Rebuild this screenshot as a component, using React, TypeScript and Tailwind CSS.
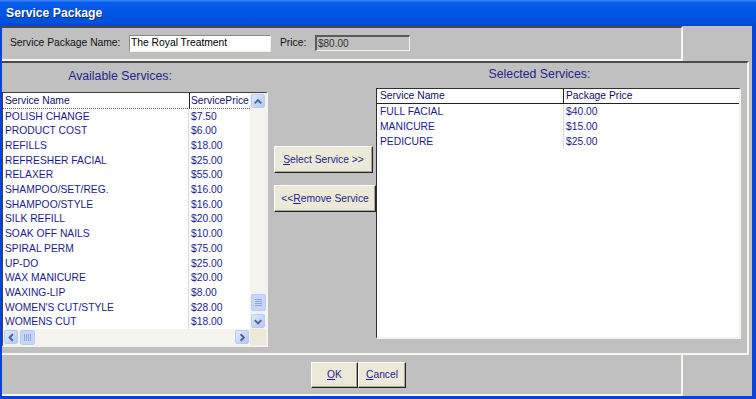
import React from 'react';

const available: [string, string][] = [
  ['POLISH CHANGE', '$7.50'],
  ['PRODUCT COST', '$6.00'],
  ['REFILLS', '$18.00'],
  ['REFRESHER FACIAL', '$25.00'],
  ['RELAXER', '$55.00'],
  ['SHAMPOO/SET/REG.', '$16.00'],
  ['SHAMPOO/STYLE', '$16.00'],
  ['SILK REFILL', '$20.00'],
  ['SOAK OFF NAILS', '$10.00'],
  ['SPIRAL PERM', '$75.00'],
  ['UP-DO', '$25.00'],
  ['WAX MANICURE', '$20.00'],
  ['WAXING-LIP', '$8.00'],
  ["WOMEN'S CUT/STYLE", '$28.00'],
  ['WOMENS CUT', '$18.00'],
];

const selected: [string, string][] = [
  ['FULL FACIAL', '$40.00'],
  ['MANICURE', '$15.00'],
  ['PEDICURE', '$25.00'],
];

const ScrollBtn = ({ dir }: { dir: 'up' | 'down' | 'left' | 'right' }) => {
  const paths: Record<string, string> = {
    up: 'M4 9.5 L7.5 6 L11 9.5',
    down: 'M4 6 L7.5 9.5 L11 6',
    left: 'M9.5 4 L6 7.5 L9.5 11',
    right: 'M6 4 L9.5 7.5 L6 11',
  };
  return (
    <div className="w-[16px] h-[16px] p-px shrink-0">
      <div className="w-full h-full rounded-[2px] border border-[#b7cbf6] bg-[linear-gradient(to_bottom_right,#e1eafe,#c3d4fb_60%,#b3c8f5)] flex items-center justify-center">
        <svg width="13" height="13" viewBox="1 1 13 13">
          <path d={paths[dir]} fill="none" stroke="#4d6185" strokeWidth="2" />
        </svg>
      </div>
    </div>
  );
};

const Thumb = ({ vertical }: { vertical: boolean }) => (
  <div
    className={
      'rounded-[2px] border border-[#b7cbf6] bg-[#c7d7fb] flex items-center justify-center ' +
      (vertical ? 'w-[15px] h-[17px] flex-col gap-[1px]' : 'w-[15px] h-[15px] gap-[1px]')
    }
  >
    {[0, 1, 2, 3].map((i) => (
      <div key={i} className={vertical ? 'w-[7px] h-px bg-[#8ca5dc]' : 'h-[7px] w-px bg-[#8ca5dc]'} />
    ))}
  </div>
);

const WinButton = ({
  w,
  h,
  hot,
  rest,
  pre = '',
}: {
  w: string;
  h: string;
  hot: string;
  rest: string;
  pre?: string;
}) => (
  <div
    className={`${w} ${h} bg-[#ece9d8] border-t border-l border-white border-r border-b border-r-[#222] border-b-[#222] shadow-[inset_-1px_-1px_0_#aca899] flex items-center justify-center text-[10.3px] text-[#1e1e8c]`}
  >
    <span>
      {pre}
      <span className="underline">{hot}</span>
      {rest}
    </span>
  </div>
);

export default function App() {
  return (
    <div className="w-[756px] h-[399px] bg-[#0842d8] flex flex-col font-['Liberation_Sans',Arial,sans-serif] overflow-hidden">
      {/* title bar */}
      <div className="h-[26px] shrink-0 flex items-center pl-[6px] bg-[linear-gradient(to_bottom,#3a88f6_0%,#0a5ce9_10%,#0055e5_45%,#0051de_85%,#0046c8_100%)]">
        <span className="text-white font-bold text-[12.2px] [text-shadow:1px_1px_#0b2b8a]">Service Package</span>
      </div>

      {/* body */}
      <div className="flex-1 ml-[2px] mr-[4px] mb-[3px] bg-[#c0c0c0] flex flex-col">
        {/* top row */}
        <div className="h-[35px] shrink-0 flex">
          <div className="w-[681px] border-t-2 border-t-[#4a4a4a] border-r-2 border-b-2 border-r-[#f6f5ee] border-b-[#f6f5ee] flex items-center pl-[8px] pb-[1px] text-[10.3px] text-[#111]">
            <span className="w-[119px]">Service Package Name:</span>
            <div className="w-[142px] h-[17px] bg-white border-t border-l border-[#8a8a8a] border-r border-b border-r-[#f0efe4] border-b-[#f0efe4] flex items-center pl-[1px] text-black">
              The Royal Treatment
            </div>
            <span className="ml-[9px] w-[35px]">Price:</span>
            <div className="w-[95px] h-[16px] border-t-2 border-l-2 border-t-[#5a5a5a] border-l-[#5a5a5a] border-r border-b border-r-[#f6f5ee] border-b-[#f6f5ee] flex items-center pl-px text-[10px] text-[#333]">
              $80.00
            </div>
          </div>
        </div>

        {/* middle panel */}
        <div className="h-[294px] shrink-0 flex">
          <div className="w-[747px] border-t-2 border-t-[#4a4a4a] border-r-2 border-b-2 border-r-[#f6f5ee] border-b-[#f6f5ee] flex">
            {/* left column */}
            <div className="w-[266px] flex flex-col">
              <div className="h-[29px] flex items-center justify-center pr-[30px] pb-[2px] text-[12.3px] text-[#25258a]">
                Available Services:
              </div>
              <div className="h-[255px] flex flex-col border-t border-l border-[#404040] border-r-2 border-b-2 border-r-[#f4f3ec] border-b-[#f4f3ec]">
                <div className="h-[236px] flex">
                  <div className="w-[247px] bg-white overflow-hidden text-[10.3px] text-[#1c1c8a]">
                    <div className="h-[16px] flex border-b border-dotted border-[#555]">
                      <div className="w-[186px] pl-[2px] flex items-center text-[#10105e]">Service Name</div>
                      <div className="w-px bg-[#222]" />
                      <div className="flex-1 pl-[1px] flex items-center whitespace-nowrap overflow-hidden text-[#10105e]">ServicePrice</div>
                    </div>
                    {available.map(([n, p]) => (
                      <div key={n} className="h-[14.7px] flex">
                        <div className="w-[186px] pl-[2px] flex items-center border-r border-[#dcdcdc] whitespace-nowrap">{n}</div>
                        <div className="flex-1 pl-[2px] flex items-center">{p}</div>
                      </div>
                    ))}
                  </div>
                  <div className="w-[16px] bg-[#f4f3ee] flex flex-col">
                    <ScrollBtn dir="up" />
                    <div className="flex-1" />
                    <div className="flex justify-center mb-[2px]">
                      <Thumb vertical />
                    </div>
                    <ScrollBtn dir="down" />
                  </div>
                </div>
                <div className="h-[16px] flex">
                  <div className="w-[247px] bg-[#f4f3ee] flex items-center">
                    <ScrollBtn dir="left" />
                    <div className="ml-[1px]">
                      <Thumb vertical={false} />
                    </div>
                    <div className="flex-1" />
                    <ScrollBtn dir="right" />
                  </div>
                  <div className="w-[16px] bg-[#ece9d8]" />
                </div>
              </div>
            </div>

            {/* buttons column */}
            <div className="ml-[6px] w-[102px] flex flex-col pt-[83px] gap-[12px]">
              <WinButton w="w-[99px]" h="h-[27px]" hot="S" rest="elect Service >>" />
              <WinButton w="w-[102px]" h="h-[27px]" pre="<<" hot="R" rest="emove Service" />
            </div>

            {/* right column */}
            <div className="w-[365px] flex flex-col">
              <div className="h-[25px] flex items-center justify-center pr-[38px] pb-[3px] text-[12.3px] text-[#25258a]">
                Selected Services:
              </div>
              <div className="h-[251px] bg-white border-t border-l border-[#303030] border-r-2 border-b-2 border-r-[#f4f3ec] border-b-[#f4f3ec] text-[10.3px] text-[#1c1c8a]">
                <div className="h-[15px] flex border-b border-[#222]">
                  <div className="w-[186px] pl-[3px] flex items-center text-[#10105e]">Service Name</div>
                  <div className="w-px bg-[#222]" />
                  <div className="flex-1 pl-[2px] flex items-center text-[#10105e]">Package Price</div>
                </div>
                {selected.map(([n, p]) => (
                  <div key={n} className="h-[15px] flex">
                    <div className="w-[187px] pl-[3px] flex items-center border-r border-[#dcdcdc]">{n}</div>
                    <div className="flex-1 pl-[2px] flex items-center">{p}</div>
                  </div>
                ))}
              </div>
            </div>
          </div>
        </div>

        {/* bottom panel */}
        <div className="flex-1 flex">
          <div className="w-[681px] border-r-2 border-b-2 border-r-[#f6f5ee] border-b-[#f6f5ee] flex items-start pl-[309px] pt-[7px]">
            <WinButton w="w-[47px]" h="h-[26px]" hot="O" rest="K" />
            <WinButton w="w-[48px]" h="h-[26px]" hot="C" rest="ancel" />
          </div>
        </div>
      </div>
    </div>
  );
}
